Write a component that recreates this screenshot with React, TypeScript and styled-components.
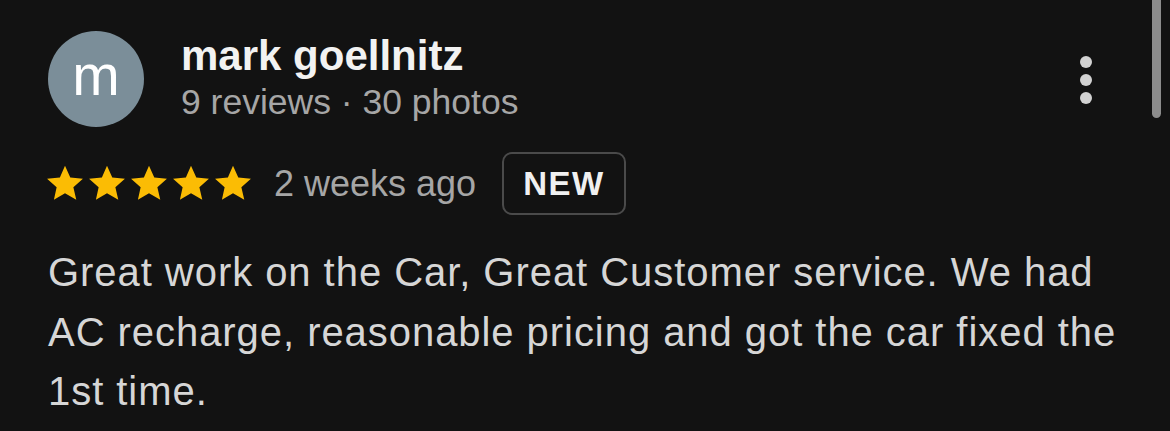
import styled, { createGlobalStyle } from "styled-components";

const GlobalStyle = createGlobalStyle`
  html, body {
    margin: 0;
    padding: 0;
    background: #121212;
  }
  body {
    font-family: "Liberation Sans", Arial, Helvetica, sans-serif;
    overflow: hidden;
  }
`;

const Star = () => (
  <svg width="42" height="41" viewBox="0 0 24 24">
    <path
      fill="#fbbc04"
      d="M12 1.6l3.1 6.9 7.4.7-5.6 5 1.7 7.3L12 17.7l-6.5 3.8 1.6-7.3-5.6-5 7.5-.7z"
    />
  </svg>
);

const App = () => {
  return (
    <>
      <GlobalStyle />
      <Review>
        <Header>
          <Avatar>m</Avatar>
          <Author>
            <Name>mark goellnitz</Name>
            <Meta>9 reviews · 30 photos</Meta>
          </Author>
          <MenuButton aria-label="More">
            <Dot />
            <Dot />
            <Dot />
          </MenuButton>
        </Header>
        <RatingRow>
          <Stars>
            {[0, 1, 2, 3, 4].map((i) => (
              <Star key={i} />
            ))}
          </Stars>
          <When>2 weeks ago</When>
          <Badge>NEW</Badge>
        </RatingRow>
        <Body>
          Great work on the Car, Great Customer service. We had AC recharge,
          reasonable pricing and got the car fixed the 1st time.
        </Body>
      </Review>
      <ScrollThumb />
    </>
  );
};

export default App;

const Review = styled.div`
  padding: 31px 30px 0 48px;
  color: #fff;
`;

const Header = styled.div`
  display: flex;
  align-items: flex-start;
`;

const Avatar = styled.div`
  width: 96px;
  height: 96px;
  border-radius: 50%;
  background: #7b8e99;
  color: #fff;
  font-size: 57px;
  line-height: 88px;
  text-align: center;
  flex-shrink: 0;
`;

const Author = styled.div`
  margin-left: 37px;
  flex: 1;
  padding-top: 3px;
`;

const Name = styled.div`
  font-weight: 700;
  font-size: 42px;
  line-height: 44px;
  color: #f2f2f2;
`;

const Meta = styled.div`
  margin-top: 1px;
  font-size: 35.5px;
  line-height: 46px;
  color: #a6a6a6;
`;

const MenuButton = styled.div`
  display: flex;
  flex-direction: column;
  gap: 6px;
  margin-top: 25px;
  margin-right: 48px;
`;

const Dot = styled.span`
  width: 12px;
  height: 12px;
  border-radius: 50%;
  background: #d2d2d2;
`;

const RatingRow = styled.div`
  display: flex;
  align-items: center;
  margin-top: 25px;
`;

const Stars = styled.div`
  display: flex;
  gap: 0;
  margin-left: -4px;
`;

const When = styled.span`
  margin-left: 20px;
  font-size: 36px;
  color: #a6a6a6;
`;

const Badge = styled.span`
  margin-left: 26px;
  height: 59px;
  padding: 0 19px;
  display: flex;
  align-items: center;
  border: 2px solid #4a4a4a;
  border-radius: 10px;
  font-weight: 700;
  font-size: 33px;
  letter-spacing: 1.5px;
  color: #f0f0f0;
`;

const Body = styled.p`
  margin: 28px 0 0;
  font-size: 40px;
  letter-spacing: 0.95px;
  line-height: 59.5px;
  color: #d6d6d6;
`;

const ScrollThumb = styled.div`
  position: fixed;
  top: -10px;
  right: 9px;
  width: 9px;
  height: 128px;
  border-radius: 5px;
  background: #8c8c8c;
`;
